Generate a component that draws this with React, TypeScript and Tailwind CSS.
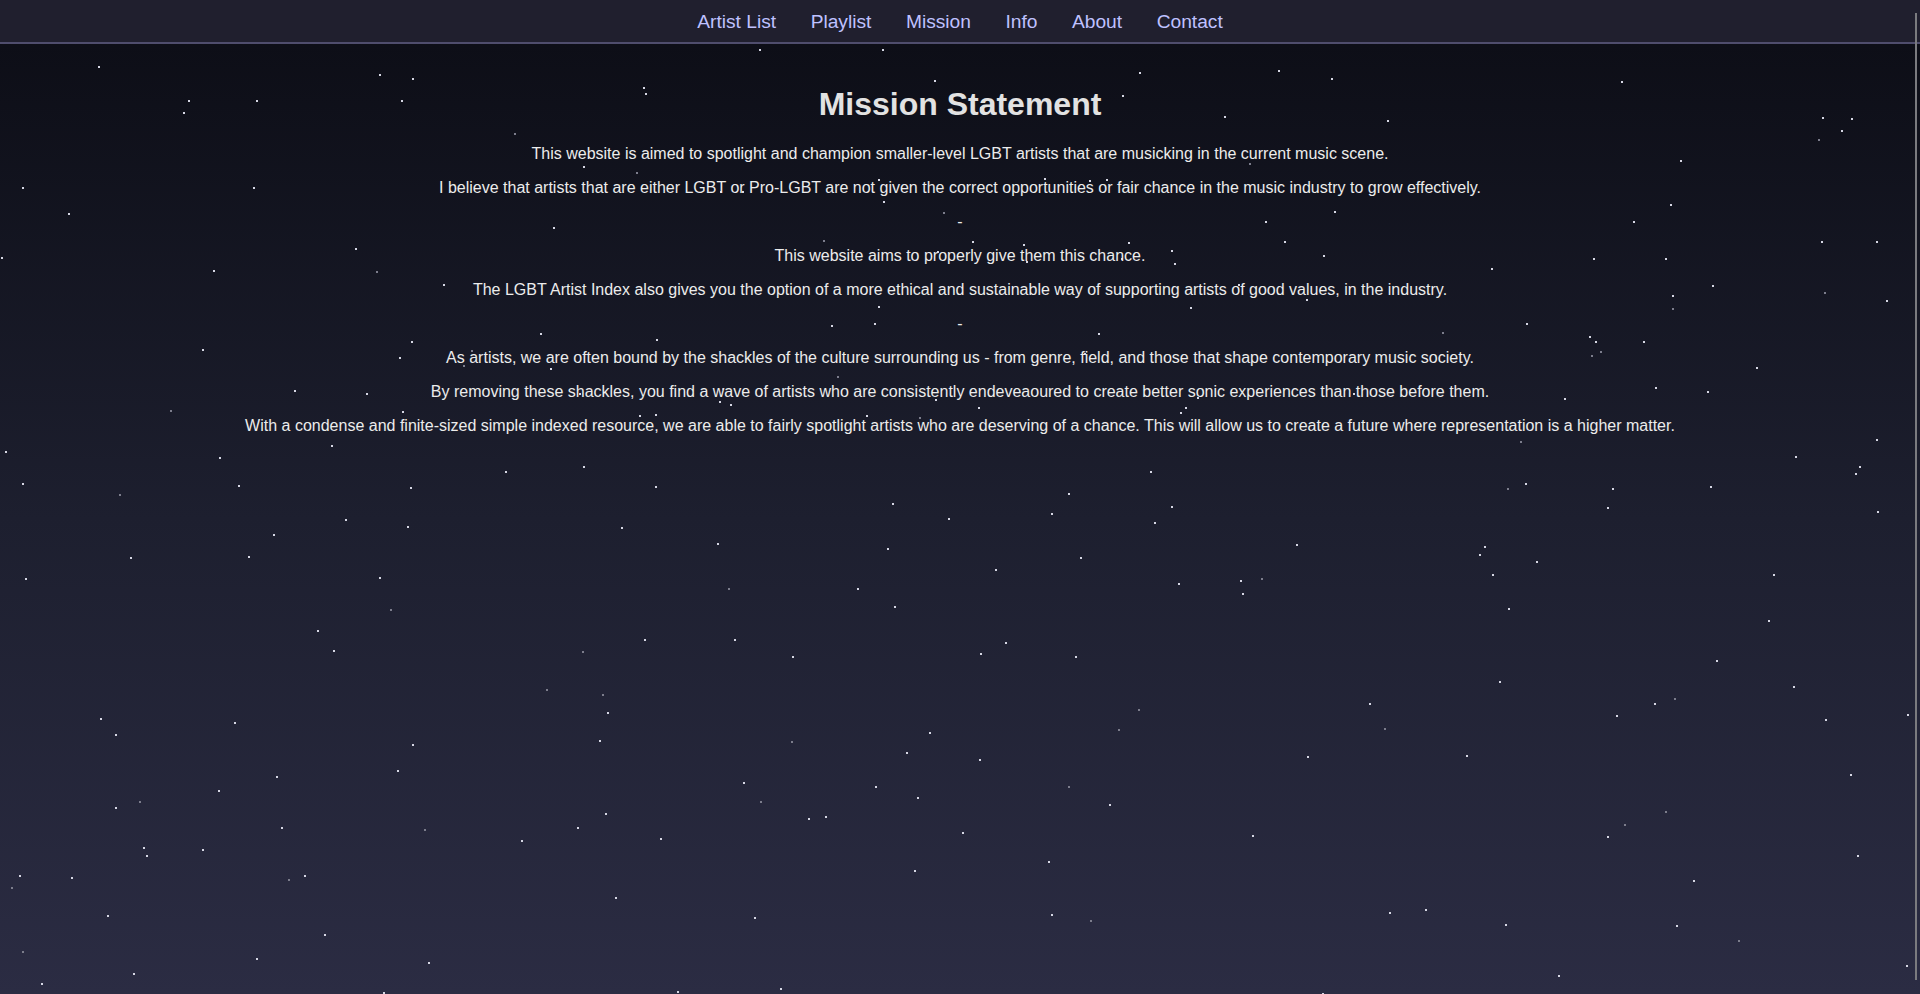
import { useMemo } from 'react';

const links = ['Artist List', 'Playlist', 'Mission', 'Info', 'About', 'Contact'];

const lines = [
  'This website is aimed to spotlight and champion smaller-level LGBT artists that are musicking in the current music scene.',
  'I believe that artists that are either LGBT or Pro-LGBT are not given the correct opportunities or fair chance in the music industry to grow effectively.',
  '-',
  'This website aims to properly give them this chance.',
  'The LGBT Artist Index also gives you the option of a more ethical and sustainable way of supporting artists of good values, in the industry.',
  '-',
  'As artists, we are often bound by the shackles of the culture surrounding us - from genre, field, and those that shape contemporary music society.',
  'By removing these shackles, you find a wave of artists who are consistently endeveaoured to create better sonic experiences than those before them.',
  'With a condense and finite-sized simple indexed resource, we are able to fairly spotlight artists who are deserving of a chance. This will allow us to create a future where representation is a higher matter.',
];

// small seeded random so the sky is the same every render
function makeStars(count: number) {
  let seed = 1337;
  const rand = () => {
    seed = (seed * 16807) % 2147483647;
    return (seed - 1) / 2147483646;
  };
  return Array.from({ length: count }, () => ({
    x: Math.floor(rand() * 1910),
    y: Math.floor(rand() * 960),
    dim: rand() < 0.15,
  }));
}

export default function App() {
  const stars = useMemo(() => makeStars(270), []);

  return (
    <div className="relative flex min-h-screen flex-col font-['Liberation_Sans',Arial,sans-serif]">
      {/* Nav */}
      <nav className="flex h-[44px] shrink-0 items-center justify-center gap-[34.5px] border-b-2 border-[#4f4d6d] bg-[#201f2e] pt-[1px]">
        {links.map((link) => (
          <a key={link} href="#" className="text-[19.2px] leading-none text-[#bfc1ff]">
            {link}
          </a>
        ))}
      </nav>

      {/* Sky + mission */}
      <main className="relative flex-1 overflow-hidden bg-linear-to-b from-[#0d0e17] via-[#1d1f2f] to-[#2b2c43] px-5 pt-[21px] pb-5">
        {stars.map((s, i) => (
          <span
            key={i}
            className={`absolute h-[2px] w-[2px] ${s.dim ? 'bg-[#7c7d8c]' : 'bg-[#d6d7e4]'}`}
            style={{ left: s.x, top: s.y }}
          />
        ))}

        <div className="relative text-center">
          <h1 className="mt-[21px] mb-[22px] text-[32px] font-bold leading-[37px] text-[#e2e2e2]">Mission Statement</h1>
          {lines.map((line, i) => (
            <p key={i} className="my-4 text-[16px] leading-[18px] text-[#ececec]">
              {line}
            </p>
          ))}
        </div>
      </main>

      {/* overlay scrollbar thumb */}
      <div className="pointer-events-none absolute right-[3px] top-[13px] bottom-[14px] w-[2px] bg-[#7b7b7f]" />
    </div>
  );
}
